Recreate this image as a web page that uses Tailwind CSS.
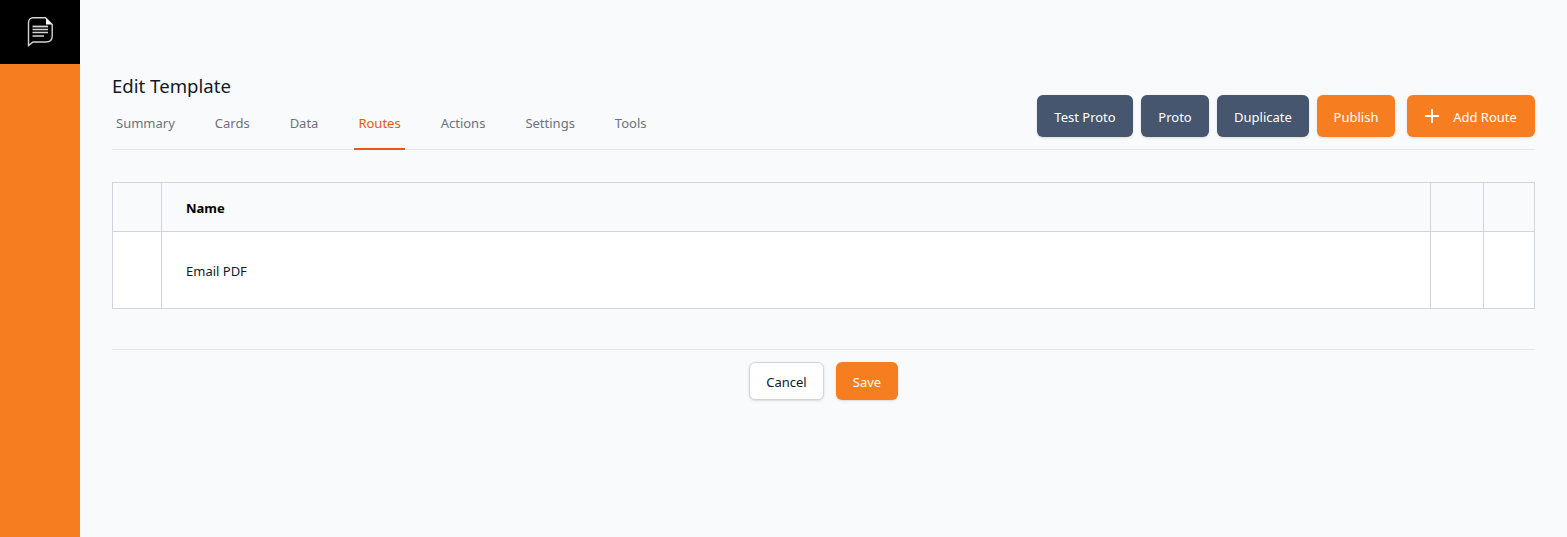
<!DOCTYPE html>
<html lang="en">
  <head>
    <meta charset="UTF-8" />
    <title>Edit Template</title>
    <script src="https://cdn.jsdelivr.net/npm/@tailwindcss/browser@4"></script>
  </head>
  <body class="bg-[#f9fafb] font-['Noto_Sans',sans-serif]">
    <div class="flex h-[537px] overflow-hidden">
      <!-- Sidebar -->
      <div class="w-20 shrink-0 bg-[#f67d20]">
        <div class="flex h-16 items-center justify-center bg-black">
          <svg width="26" height="30" viewBox="0 0 26 30" fill="none" stroke="#d4d4d4" stroke-width="1.400">
            <path d="M6 .8H18.500L25.200 7.500V19C25.200 22.800 22.800 25 19 25H6L1.500 28.500V5.500C1.500 2.800 3.300 .8 6 .8Z" />
            <path d="M19 1.500V7.500H25L19 1.500Z" fill="#fff" stroke="none" />
            <path d="M5.500 9.500H21" stroke-width="1.800" />
            <path d="M5.500 12.500H21M5.500 15.500H21M5.500 19H17" stroke-width="1.300" />
          </svg>
        </div>
      </div>

      <!-- Main -->
      <div class="flex-1 px-8 pt-[72px]">
        <div class="flex h-[78px] justify-between border-b border-[#e5e7eb]">
          <div>
            <h1 class="text-[18.6px] leading-7 text-[#111827]">Edit Template</h1>
            <nav class="mt-[5px] flex gap-8 text-[13px] text-[#6b7280]">
              <a class="h-[45px] px-1 pt-[9px]">Summary</a>
              <a class="h-[45px] px-1 pt-[9px]">Cards</a>
              <a class="h-[45px] px-1 pt-[9px]">Data</a>
              <a class="h-[45px] border-b-2 border-[#ea580c] px-1 pt-[9px] text-[#ea580c]">Routes</a>
              <a class="h-[45px] px-1 pt-[9px]">Actions</a>
              <a class="h-[45px] px-1 pt-[9px]">Settings</a>
              <a class="h-[45px] px-1 pt-[9px]">Tools</a>
            </nav>
          </div>
          <div class="flex pt-[23px] text-[13px] text-white">
            <button class="h-[42px] w-24 rounded-md bg-[#46566e] pt-1 shadow-sm">Test Proto</button>
            <button class="ml-2 h-[42px] w-[68px] rounded-md bg-[#46566e] pt-1 shadow-sm">Proto</button>
            <button class="ml-2 h-[42px] w-[92px] rounded-md bg-[#46566e] pt-1 shadow-sm">Duplicate</button>
            <button class="ml-2 h-[42px] w-[78px] rounded-md bg-[#f67d20] pt-1 shadow-sm">Publish</button>
            <button class="ml-3 flex h-[42px] w-32 items-center justify-center gap-3.5 rounded-md bg-[#f67d20] shadow-sm">
              <svg width="14" height="14" viewBox="0 0 14 14" stroke="#fff" stroke-width="2"><path d="M7 0V14M0 7H14" /></svg>
              <span class="pt-1">Add Route</span>
            </button>
          </div>
        </div>

        <!-- Table -->
        <table class="mt-8 w-full table-fixed border-collapse text-[13px] text-[#111827]">
          <thead>
            <tr class="h-[49px]">
              <th class="w-[49px] border border-[#d1d5db]"></th>
              <th class="border border-[#d1d5db] px-6 pt-1 text-left font-bold text-black">Name</th>
              <th class="w-[53px] border border-[#d1d5db]"></th>
              <th class="w-[51px] border border-[#d1d5db]"></th>
            </tr>
          </thead>
          <tbody class="bg-white">
            <tr class="h-[77px]">
              <td class="border border-[#d1d5db]"></td>
              <td class="border border-[#d1d5db] px-6 pt-1">Email PDF</td>
              <td class="border border-[#d1d5db]"></td>
              <td class="border border-[#d1d5db]"></td>
            </tr>
          </tbody>
        </table>

        <div class="mt-10 flex justify-center gap-3 border-t border-[#e5e7eb] pt-3 text-[13px]">
          <button class="h-[38px] w-[75px] rounded-md border border-[#d1d5db] bg-white pt-1 text-[#111827] shadow-sm">Cancel</button>
          <button class="h-[38px] w-[62px] rounded-md bg-[#f67d20] pt-1 text-white shadow-sm">Save</button>
        </div>
      </div>
    </div>
  </body>
</html>
